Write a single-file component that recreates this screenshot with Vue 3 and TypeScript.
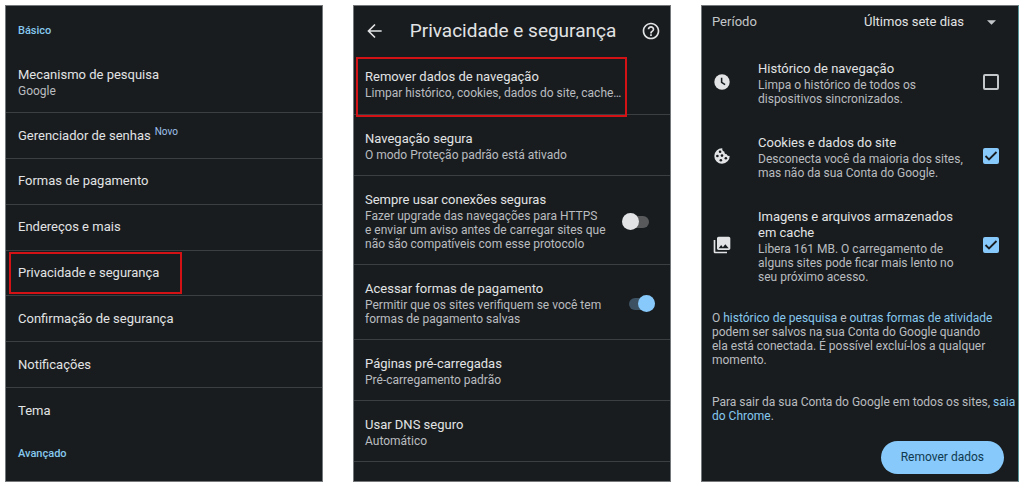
<script setup lang="ts">
import { ref } from 'vue'

interface Row { title: string; badge?: string; marked?: boolean }
interface Setting { id: string; title: string; note: string; marked?: boolean; toggle?: 'on' | 'off' }
interface DataType { id: string; icon: 'clock' | 'cookie' | 'images'; title: string; note: string; checked: boolean }

const basics: Row[] = [
  { title: 'Gerenciador de senhas', badge: 'Novo' },
  { title: 'Formas de pagamento' },
  { title: 'Endereços e mais' },
  { title: 'Privacidade e segurança', marked: true },
  { title: 'Confirmação de segurança' },
  { title: 'Notificações' },
  { title: 'Tema' },
]

const settings: Setting[] = [
  { id: 'clear', title: 'Remover dados de navegação', note: 'Limpar histórico, cookies, dados do site, cache…', marked: true },
  { id: 'safe', title: 'Navegação segura', note: 'O modo Proteção padrão está ativado' },
  { id: 'https', title: 'Sempre usar conexões seguras', note: 'Fazer upgrade das navegações para HTTPS\ne enviar um aviso antes de carregar sites que\nnão são compatíveis com esse protocolo', toggle: 'off' },
  { id: 'pay', title: 'Acessar formas de pagamento', note: 'Permitir que os sites verifiquem se você tem\nformas de pagamento salvas', toggle: 'on' },
  { id: 'preload', title: 'Páginas pré-carregadas', note: 'Pré-carregamento padrão' },
  { id: 'dns', title: 'Usar DNS seguro', note: 'Automático' },
]

const dataTypes = ref<DataType[]>([
  { id: 'history', icon: 'clock', title: 'Histórico de navegação', note: 'Limpa o histórico de todos os\ndispositivos sincronizados.', checked: false },
  { id: 'cookies', icon: 'cookie', title: 'Cookies e dados do site', note: 'Desconecta você da maioria dos sites,\nmas não da sua Conta do Google.', checked: true },
  { id: 'cache', icon: 'images', title: 'Imagens e arquivos armazenados\nem cache', note: 'Libera 161 MB. O carregamento de\nalguns sites pode ficar mais lento no\nseu próximo acesso.', checked: true },
])
</script>

<template>
  <main class="screens">
    <section class="panel basic">
      <h2 class="group first">Básico</h2>
      <button class="row engine" type="button">
        <span class="title">Mecanismo de pesquisa</span>
        <span class="note">Google</span>
      </button>
      <button v-for="row in basics" :key="row.title" class="row single" type="button">
        <span class="title" :class="{ marked: row.marked }">{{ row.title }}<span v-if="row.badge" class="badge">{{ row.badge }}</span></span>
      </button>
      <h2 class="group last">Avançado</h2>
    </section>

    <section class="panel privacy">
      <header class="bar">
        <button class="icon-button" type="button" aria-label="Voltar">
          <svg width="20" height="20" viewBox="0 0 24 24" fill="none" stroke="currentColor" stroke-width="2"><path d="M20 12H4.500M12 4.200 4.200 12l7.800 7.800" /></svg>
        </button>
        <h1>Privacidade e segurança</h1>
        <button class="icon-button" type="button" aria-label="Ajuda">
          <svg width="20" height="20" viewBox="0 0 24 24" fill="currentColor"><path d="M11 18h2v-2h-2v2zm1-16C6.480 2 2 6.480 2 12s4.480 10 10 10 10-4.480 10-10S17.520 2 12 2zm0 18c-4.410 0-8-3.590-8-8s3.590-8 8-8 8 3.590 8 8-3.590 8-8 8zm0-14c-2.210 0-4 1.790-4 4h2c0-1.100.9-2 2-2s2 .9 2 2c0 2-3 1.750-3 5h2c0-2.250 3-2.500 3-5 0-2.210-1.790-4-4-4z" /></svg>
        </button>
      </header>
      <template v-for="item in settings" :key="item.id">
        <label v-if="item.toggle" class="setting" :for="item.id">
          <span class="text">
            <span class="title">{{ item.title }}</span>
            <span class="note">{{ item.note }}</span>
          </span>
          <input :id="item.id" class="switch" type="checkbox" role="switch" :class="item.toggle" :checked="item.toggle === 'on'">
        </label>
        <button v-else class="setting" :class="{ outlined: item.marked }" type="button">
          <span class="text">
            <span class="title">{{ item.title }}</span>
            <span class="note">{{ item.note }}</span>
          </span>
        </button>
      </template>
      <button class="setting peek" type="button"><span class="title">Políticas e ações</span></button>
    </section>

    <section class="panel clear">
      <div class="period">
        <label for="period">Período</label>
        <div class="select-wrap">
          <select id="period">
            <option>Últimos sete dias</option>
          </select>
          <svg width="9" height="5" viewBox="0 0 10 5" fill="currentColor"><path d="M0 0h10L5 5z" /></svg>
        </div>
      </div>
      <label v-for="item in dataTypes" :key="item.id" class="data" :for="item.id">
        <svg v-if="item.icon === 'clock'" class="data-icon" viewBox="-1 -1 26 26"><circle cx="12" cy="12" r="10" fill="currentColor" /><path d="M11.500 6.500v6l4.500 3" fill="none" stroke="#191c1e" stroke-width="2" /></svg>
        <svg v-else-if="item.icon === 'cookie'" class="data-icon" viewBox="-1 -1 26 26">
          <path d="M12.400 2A10 10 0 1 0 22 11.600c-1.700.7-3.400-.2-3.700-1.900-2 .3-3.500-1.300-3.100-3.200-2-.2-3.300-2.200-2.800-4.500z" fill="currentColor" />
          <g fill="#191c1e"><circle cx="9.500" cy="6.500" r="1.700" /><circle cx="6" cy="12" r="1.700" /><circle cx="12" cy="11.500" r="1.700" /><circle cx="10.500" cy="17.500" r="1.700" /><circle cx="17" cy="15" r="1.700" /></g>
        </svg>
        <svg v-else class="data-icon" viewBox="0 0 24 24" fill="currentColor"><path d="M22 16V4c0-1.100-.9-2-2-2H8c-1.100 0-2 .9-2 2v12c0 1.100.9 2 2 2h12c1.100 0 2-.9 2-2zm-11-4 2.030 2.710L16 11l4 5H8l3-4zM2 6v14c0 1.100.9 2 2 2h14v-2H4V6H2z" /></svg>
        <span class="text">
          <span class="title">{{ item.title }}</span>
          <span class="note">{{ item.note }}</span>
        </span>
        <span class="check">
          <input :id="item.id" v-model="item.checked" type="checkbox">
          <svg v-if="item.checked" viewBox="0 0 16 16" fill="none" stroke="#191c1e" stroke-width="1.800"><path d="m2.500 8 3.500 3.500L13.500 4" /></svg>
        </span>
      </label>
      <p class="info">O <a href="#">histórico de pesquisa</a> e <a href="#">outras formas de atividade</a> podem ser salvos na sua Conta do Google quando ela está conectada. É possível excluí-los a qualquer momento.</p>
      <p class="info signout">Para sair da sua Conta do Google em todos os sites, <a href="#">saia do Chrome</a>.</p>
      <button class="primary" type="button">Remover dados</button>
    </section>
  </main>
</template>

<style>
body { margin: 0; background: #fff; }
</style>

<style scoped>
.screens {
  display: grid;
  grid-template-columns: repeat(3, 1fr);
  gap: 30px;
  box-sizing: border-box;
  min-height: 100vh;
  padding: 5px;
  font-family: Roboto, "Liberation Sans", sans-serif;
  font-size: 13px;
  line-height: 16px;
  color: #e1e3e5;
}
.panel {
  display: flex;
  flex-direction: column;
  box-sizing: border-box;
  min-width: 0;
  border: 1px solid #74787a;
  background: #191c1e;
}
button {
  border: 0;
  padding: 0;
  background: none;
  color: inherit;
  font: inherit;
  text-align: left;
}
h1, h2, p { margin: 0; }
.title, .note { display: block; white-space: pre-line; }
.note { margin-top: 1px; font-size: 12px; line-height: 14px; color: #b9bdc0; }
.group { padding: 0 12px; font-size: 11px; line-height: 16px; font-weight: 500; color: #86c8ee; }
.first { padding-top: 17px; }
.last { padding-top: 13px; padding-bottom: 19px; }
.row { padding: 0 12px; }
.engine { padding-top: 28px; padding-bottom: 14px; }
.single { flex: 1; border-top: 1px solid #3b3f41; }
.badge { margin-left: 4px; font-size: 10px; line-height: 10px; vertical-align: 5px; color: #9fc0ec; }
.marked { width: fit-content; margin: 0 -9px; padding: 11px 21px 11px 7px; border: 2px solid #d31216; }

.bar { display: flex; align-items: center; justify-content: space-between; padding: 15px 9px 16px 11px; }
.bar h1 { font-size: 19px; line-height: 20px; font-weight: 400; }
.icon-button { display: flex; }
.setting { display: flex; align-items: center; justify-content: space-between; padding: 16px 11px 13px; border-top: 1px solid #3b3f41; }
.outlined { position: relative; margin: 0 43px -3px 2px; padding: 10px 2px 15px 7px; border: 2px solid #d31216; }
.outlined .note { white-space: nowrap; }
.peek { align-items: flex-start; height: 20px; padding-top: 17px; padding-bottom: 0; overflow: hidden; }
.switch {
  appearance: none;
  display: flex;
  align-items: center;
  flex-shrink: 0;
  width: 26px;
  height: 12px;
  margin: 0 10px;
  border-radius: 6px;
  background: #57595b;
}
.switch::before { content: ""; width: 17px; height: 17px; margin-left: -1px; border-radius: 50%; background: #e1e3e5; }
.switch.on { justify-content: flex-end; margin-right: 4px; background: #3c5263; }
.switch.on::before { background: #87c9fa; }

.clear { border-right-color: #57979c; }
.period { display: flex; justify-content: space-between; align-items: center; padding: 8px 22px 16px 10px; color: #c4c7c9; }
.select-wrap { display: flex; align-items: center; gap: 22px; }
select { appearance: none; height: 16px; border: 0; padding: 0; background: none; color: #e1e3e5; font: inherit; }
.data { display: flex; align-items: center; padding: 15px 19px 14px 10px; }
.data-icon { width: 20px; height: 20px; margin: 0 26px 4px 0; color: #e1e3e5; }
.data .text { flex: 1; }
.check { display: grid; width: 16px; height: 16px; margin-bottom: 4px; }
.check > * { grid-area: 1 / 1; width: 16px; height: 16px; }
.check input { appearance: none; box-sizing: border-box; margin: 0; border: 2px solid #c4c7c9; border-radius: 2px; }
.check input:checked { border-color: #87c9fa; background: #87c9fa; }
.info { padding: 13px 22px 0 10px; font-size: 12px; line-height: 14px; color: #b9bdc0; }
.signout { padding-top: 28px; padding-right: 0; }
a { color: #86c8ee; text-decoration: none; }
.primary { align-self: flex-end; margin: 18px 14px 7px; padding: 8px 20px; border-radius: 17px; background: #87c9fa; color: #0f3950; font-size: 12px; line-height: 17px; }
</style>
